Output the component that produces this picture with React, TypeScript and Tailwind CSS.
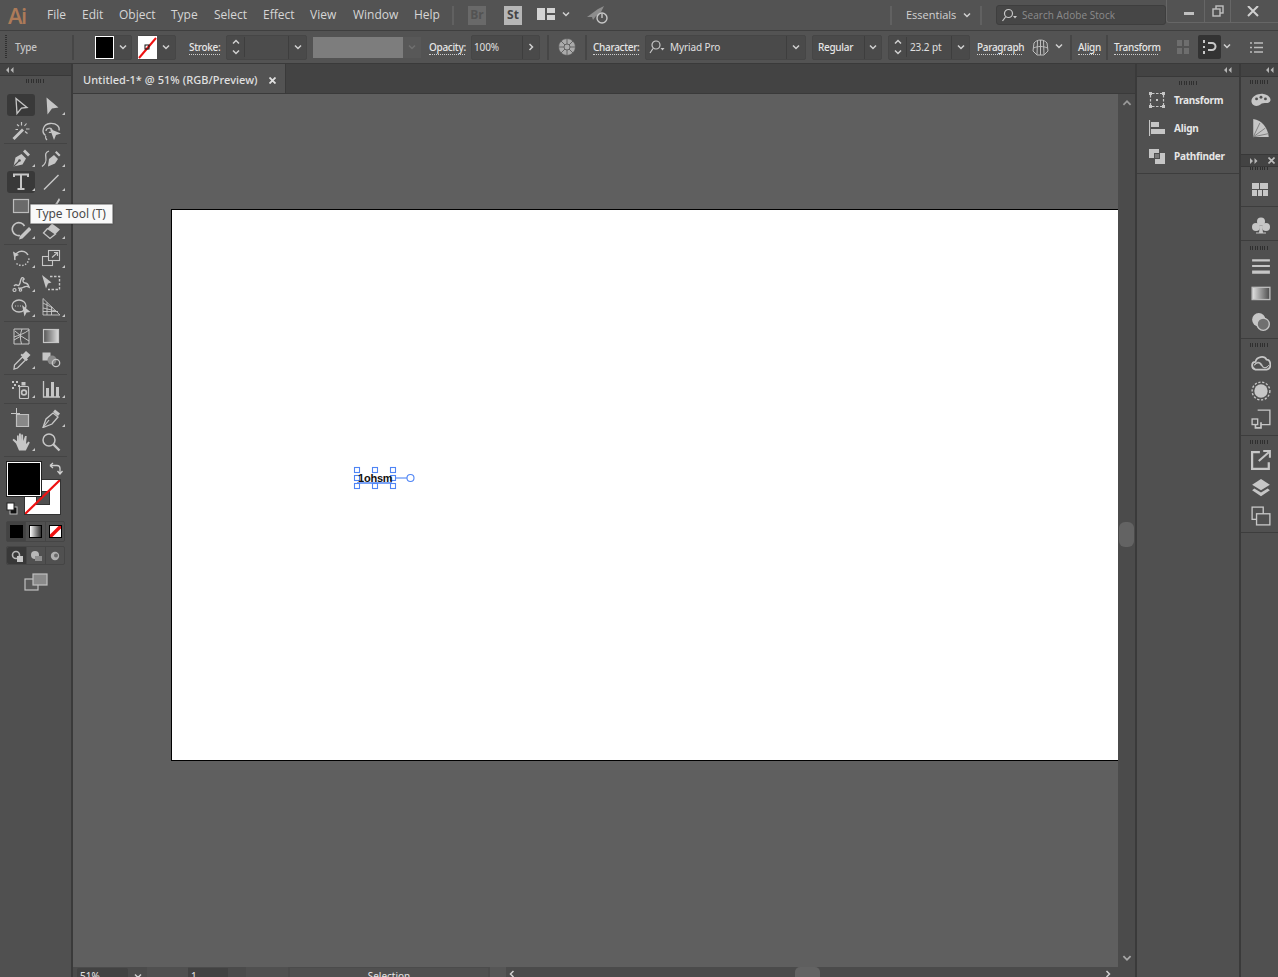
import React from "react";

const C = "#c6c6c6";

function Chev({ dir = "down", color = "#d0d0d0", size = 10 }: { dir?: "down" | "up" | "right" | "left"; color?: string; size?: number }) {
  const d = { down: "M2 3.5 5 6.5 8 3.5", up: "M2 6.5 5 3.5 8 6.5", right: "M3.5 2 6.5 5 3.5 8", left: "M6.5 2 3.5 5 6.5 8" }[dir];
  return (
    <svg width={size} height={size} viewBox="0 0 10 10" fill="none" stroke={color} strokeWidth="1.5">
      <path d={d} />
    </svg>
  );
}

function Dbl({ right = false }: { right?: boolean }) {
  return (
    <svg width="8" height="6" viewBox="0 0 8 6" fill="#b5b5b5">
      {right ? <path d="M0 0 3 3 0 6zM4.5 0 7.5 3 4.5 6z" /> : <path d="M3 0 0 3 3 6zM7.5 0 4.5 3 7.5 6z" />}
    </svg>
  );
}

function Grip({ w = "w-[19px]" }: { w?: string }) {
  return <div className={`h-[4px] ${w} bg-[repeating-linear-gradient(90deg,#2f2f2f_0_1px,transparent_1px_2.4px)]`} />;
}

function Ico({ children, w = 20, h = 20, box }: { children: React.ReactNode; w?: number; h?: number; box?: number }) {
  return (
    <svg width={w} height={h} viewBox={box ? `0 0 ${box} ${box}` : `0 0 ${w} ${h}`} fill="none" stroke={C} strokeWidth="1.2">
      {children}
    </svg>
  );
}

const tools: Record<string, React.ReactNode> = {
  select: <path d="M5 2.5 16 11.5 10.5 12 6 17.5Z" strokeWidth="1.3" />,
  direct: <path d="M5.5 1.5 17.5 11.5 11 12.5 6.5 18.5Z" fill={C} stroke="none" />,
  wand: (
    <>
      <path d="M2.5 18 12 8.5" strokeWidth="2.8" />
      <path d="M10.5 1v3.5M15.5 2.5 13.5 5M18.5 8H15M8 5 6 3.5M16.5 12.5 14 10.5M7 8.5H4.5" />
    </>
  ),
  lasso: (
    <>
      <path d="M4.5 14.5C0 11 2 3 9 2.5s10 3.5 9 7" strokeWidth="1.3" />
      <path d="M5 10c0-3 5-4 6-1 .5 2-2 3-3 2" strokeWidth="1.2" />
      <path d="M5 15c-1 1 0 3 1 4" strokeWidth="1.2" />
      <path d="M9 8 20 12.5 15 14 13 19Z" fill={C} stroke="none" />
    </>
  ),
  pen: (
    <>
      <path d="M2.5 18.5 4.5 9.5 10.5 6 15 10.5 11.5 16.5Z" fill={C} stroke="none" />
      <path d="M2.5 18.5 8 13" stroke="#505050" strokeWidth="1.1" />
      <circle cx="8.5" cy="12.5" r="1.3" fill="#505050" stroke="none" />
      <path d="M12 3.5 14 1.5 19 6.5 17 8.5Z" fill={C} stroke="none" />
    </>
  ),
  curv: (
    <>
      <path d="M7 18.5 8 11 13 7 17 11 14 15.5Z" fill={C} stroke="none" />
      <path d="M14 4.5 15.5 3 19.5 7 18 8.5Z" fill={C} stroke="none" />
      <path d="M8 3C0 6 10 12 1 18.5" strokeWidth="1.3" />
    </>
  ),
  type: <path d="M3 5V2.5h14V5M10 2.5V17M6.5 17h7" strokeWidth="2" />,
  line: <path d="M3 17.5 17.5 3" strokeWidth="1.4" />,
  rect: <rect x="2.5" y="3.5" width="15" height="13" fill="#6a6a6a" strokeWidth="1.2" stroke="#bdbdbd" />,
  brush: <path d="M5 18 15 7 18 2 19 4 16 9 8 19Z" fill={C} stroke="none" />,
  shaper: (
    <>
      <path d="M9 15.5A6.5 6.5 0 1 1 13.5 6" strokeWidth="1.6" />
      <path d="M9 16 18 7 20.5 9.5 11.5 18.5 8 19.5Z" fill={C} stroke="none" />
    </>
  ),
  eraser: (
    <>
      <path d="M6.5 8.5 11 3.5 19 9.5 14.5 14Z" fill={C} stroke="none" />
      <path d="M6.5 8.5 2.5 13 9 18.5 14.5 14Z" strokeWidth="1.3" />
    </>
  ),
  rotate: (
    <>
      <path d="M5.5 15.5A7.5 7.5 0 0 0 18 10" strokeDasharray="1.5 1.5" strokeWidth="1.5" />
      <path d="M4 12A7 7 0 0 1 17 7" strokeWidth="1.5" />
      <path d="M2 3.5 3 9 8 7Z" fill={C} stroke="none" />
    </>
  ),
  scale: (
    <>
      <rect x="1.5" y="8.5" width="10" height="9" strokeWidth="1.1" />
      <rect x="7.5" y="2.5" width="11" height="10" fill="#505050" strokeWidth="1.1" />
      <path d="M11 9.5 16 5M13 4.5h3.5V8" />
    </>
  ),
  warp: (
    <>
      <path d="M3 13C6 9 7 16 9 10c1-5 2-7 4-4-2 1-1 4 1 4s3 1 4 4c-2-1-3-1-5 0-3 2-5 1-6 1" strokeWidth="1.4" />
      <circle cx="3.5" cy="17" r="1.5" />
      <circle cx="9.5" cy="17" r="1.2" />
    </>
  ),
  free: (
    <>
      <path d="M1 2 10.5 9.5 7 10.5 5 15.5Z" fill={C} stroke="none" />
      <path d="M9 3.5h9.5v13H7" strokeDasharray="2.5 1.5" strokeWidth="1.4" />
    </>
  ),
  shape: (
    <>
      <ellipse cx="8" cy="9" rx="7" ry="6" strokeWidth="1.3" />
      <path d="M4 9h7" strokeDasharray="1 1.5" />
      <path d="M11 8 19.5 15 15.5 15.5 13.5 19.5Z" fill={C} stroke="none" />
    </>
  ),
  persp: <path d="M2 1.5V18H19L2 1.5M2 6 12 11M6 5.5V18M10.5 9.5V18M2 11l13 3M2 14.5h15" strokeWidth="0.9" />,
  mesh: <path d="M3 3h15v15H3ZM3 11C8 9 13 8 18 4M10.5 18C9 13 9 8 11 3M3 14l7-4 8 5M4 5l6 5" strokeWidth="1" />,
  grad: (
    <>
      <defs>
        <linearGradient id="gr">
          <stop offset="0" stopColor="#555" />
          <stop offset="1" stopColor="#dcdcdc" />
        </linearGradient>
      </defs>
      <rect x="2.5" y="3.5" width="15" height="13" fill="url(#gr)" stroke="#c6c6c6" />
    </>
  ),
  drop: (
    <>
      <path d="M3 19 3.5 15 11.5 7 14.5 10 6.5 18Z" strokeWidth="1.3" />
      <path d="M11.5 4.5 15 1 19.5 5 16 8.5 17 9.5 15.5 11 9.5 5 11 3.5Z" fill={C} stroke="none" />
    </>
  ),
  blend: (
    <>
      <rect x="1.5" y="2.5" width="8" height="8" fill={C} stroke="none" />
      <circle cx="11" cy="10" r="4.5" fill="#8a8a8a" stroke="none" />
      <circle cx="15" cy="13" r="3.7" strokeWidth="1.3" />
    </>
  ),
  spray: (
    <>
      <rect x="8.5" y="7.5" width="9" height="12" rx="1" />
      <circle cx="13" cy="13.5" r="2.4" strokeWidth="1.6" />
      <rect x="10.5" y="3" width="4" height="3.5" fill={C} stroke="none" />
      <path d="M1 2h2v2H1zM5 2h2v2H5zM3 5h2v2H3zM7 6h2v2H7zM1 8h2v2H1z" fill={C} stroke="none" />
    </>
  ),
  chart: (
    <>
      <path d="M2.5 2V18H19" strokeWidth="1.3" />
      <path d="M5 9h3v9H5zM10 3h3v15h-3zM15 8h3v10h-3z" fill={C} stroke="none" />
    </>
  ),
  board: (
    <>
      <path d="M5.5 6.5H17.5V18.5H5.5Z" fill="#888" stroke="#c0c0c0" />
      <path d="M5.5 0V9M0 5.5H9" stroke={C} strokeWidth="1" />
    </>
  ),
  slice: (
    <>
      <path d="M2 19.5 5 11 12 5 17 9 11 16Z" strokeWidth="1.3" />
      <path d="M2.5 19 8 12" />
      <path d="M12 4 14 1.5 19 5.5 17 8Z" fill={C} stroke="none" />
    </>
  ),
  hand: <path d="M5 11.5 1.5 8l1.2-1.2 3.3 2.5V3.5h1.7L8 8.5V1.5h1.8L10.2 8.5V2.5h1.8L12.3 9 14 4h1.7L15 12l2.5-2.5 1.3 1-4 8H8Z" fill={C} stroke="none" />,
  zoom: (
    <>
      <circle cx="8" cy="8" r="6" strokeWidth="1.5" />
      <path d="M12 12 18.5 18.5" strokeWidth="2.4" />
    </>
  ),
};

type T = [string, boolean];
const groups: { cls: string; row: string; items: [T, T][] }[] = [
  { cls: "h-[51px]", row: "h-[25px]", items: [[["select", false], ["direct", true]], [["wand", false], ["lasso", false]]] },
  { cls: "h-[101px] pt-[2px]", row: "h-[24px]", items: [[["pen", true], ["curv", true]], [["type", true], ["line", true]], [["rect", false], ["brush", false]], [["shaper", true], ["eraser", true]]] },
  { cls: "h-[77px] pt-[1px]", row: "h-[24.5px]", items: [[["rotate", true], ["scale", true]], [["warp", true], ["free", false]], [["shape", true], ["persp", true]]] },
  { cls: "h-[53px] pt-[2px]", row: "h-[24px]", items: [[["mesh", false], ["grad", false]], [["drop", true], ["blend", false]]] },
  { cls: "h-[29px] pt-[2px]", row: "h-[24px]", items: [[["spray", true], ["chart", true]]] },
  { cls: "h-[53px] pt-[2px]", row: "h-[24px]", items: [[["board", false], ["slice", true]], [["hand", true], ["zoom", false]]] },
];

function ToolCell({ name, fly }: { name: string; fly: boolean }) {
  const active = name === "select" || name === "type";
  return (
    <div className="relative flex h-full w-[30px] items-center justify-center">
      {active && <div className="absolute left-[1px] top-[1px] h-[22px] w-[28px] rounded-[3px] bg-[#393939]" />}
      <div className="relative flex">
        <Ico>{tools[name]}</Ico>
      </div>
      {fly && <div className="absolute bottom-[3px] right-[1px] h-0 w-0 border-b-[3px] border-l-[3px] border-b-[#c6c6c6] border-l-transparent" />}
    </div>
  );
}

function ToolPanel() {
  return (
    <div className="relative flex w-[73px] shrink-0 flex-col border-r-2 border-[#3a3a3a] bg-[#505050]">
      <div className="flex h-[12px] items-center border-b border-[#383838] bg-[#434343] pl-[6px]">
        <Dbl />
      </div>
      <div className="flex h-[17px] items-start justify-center pt-[3px]">
        <Grip />
      </div>
      {groups.map((g, i) => (
        <div key={i} className={`${g.cls} mx-[4px] border-b border-[#444444]`}>
          {g.items.map((r, j) => (
            <div key={j} className={`${g.row} flex pl-[2px]`}>
              <ToolCell name={r[0][0]} fly={r[0][1]} />
              <ToolCell name={r[1][0]} fly={r[1][1]} />
            </div>
          ))}
        </div>
      ))}
      <div className="relative h-[64px]">
        <div className="absolute left-[24px] top-[22px] h-[36px] w-[37px] border border-[#333] bg-white">
          <div className="absolute left-[11px] top-[11px] h-[14px] w-[14px] border border-[#333] bg-[#505050]" />
          <svg className="absolute inset-0" width="35" height="34" viewBox="0 0 35 34">
            <path d="M0 34 35 0" stroke="#ee1111" strokeWidth="2.2" />
          </svg>
        </div>
        <div className="absolute left-[7px] top-[5px] h-[34px] w-[34px] border border-white bg-black outline outline-1 outline-[#222]" />
        <svg className="absolute left-[49px] top-[5px]" width="14" height="13" viewBox="0 0 14 13" fill="none" stroke="#cfcfcf" strokeWidth="1.3">
          <path d="M2 3.5h6c2 0 3 1 3 3v5M1 3.5 4 1M1 3.5 4 6M8.5 9l2.5 3 2.5-3" />
        </svg>
        <svg className="absolute left-[6px] top-[45px]" width="12" height="13" viewBox="0 0 12 13">
          <rect x="4" y="5" width="7" height="7" fill="#111" stroke="#bbb" />
          <rect x="1" y="1" width="7" height="7" fill="#fff" stroke="#222" />
        </svg>
      </div>
      <div className="ml-[6px] flex h-[21px] w-[59px] rounded-[2px] border border-[#454545]">
        <div className="flex w-[19px] items-center justify-center border-r border-[#454545] bg-[#434343]">
          <div className="h-[13px] w-[13px] bg-black" />
        </div>
        <div className="flex w-[20px] items-center justify-center border-r border-[#454545]">
          <div className="h-[13px] w-[13px] border border-black bg-gradient-to-r from-white to-[#333]" />
        </div>
        <div className="flex flex-1 items-center justify-center">
          <svg width="13" height="13" viewBox="0 0 13 13">
            <rect width="13" height="13" fill="#fff" />
            <path d="M0 13 13 0" stroke="#e11" strokeWidth="3.4" />
            <rect x="0.5" y="0.5" width="12" height="12" fill="none" stroke="#000" />
          </svg>
        </div>
      </div>
      <div className="ml-[6px] mt-[4px] flex h-[19px] w-[59px] rounded-[2px] border border-[#454545]">
        <div className="flex w-[19px] items-center justify-center rounded-l-[2px] bg-[#383838]">
          <svg width="12" height="12" viewBox="0 0 12 12">
            <circle cx="5" cy="5" r="3.5" fill="none" stroke="#b8b8b8" strokeWidth="1.6" />
            <rect x="6" y="6" width="6" height="6" fill="#c6c6c6" />
          </svg>
        </div>
        <div className="flex w-[20px] items-center justify-center border-x border-[#454545]">
          <svg width="12" height="12" viewBox="0 0 12 12">
            <circle cx="5" cy="5" r="4" fill="#b8b8b8" />
            <rect x="5" y="6" width="7" height="5" fill="#8e8e8e" />
          </svg>
        </div>
        <div className="flex flex-1 items-center justify-center">
          <svg width="10" height="10" viewBox="0 0 10 10">
            <circle cx="5" cy="5" r="4.2" fill="#b0b0b0" />
            <circle cx="6" cy="4.5" r="2" fill="#6a6a6a" />
          </svg>
        </div>
      </div>
      <div className="mt-[8px] flex justify-center">
        <svg width="24" height="18" viewBox="0 0 24 18" fill="none" stroke="#c0c0c0" strokeWidth="1.2">
          <rect x="1" y="6" width="13" height="11" fill="#5a5a5a" />
          <rect x="9" y="1" width="14" height="11" fill="#8a8a8a" />
        </svg>
      </div>
      <div className="absolute left-[30px] top-[140px] flex h-[20px] w-[83px] items-center rounded-[1px] border border-[#a8a8a8] bg-[#f9f9f9] pl-[5px] font-['Noto_Sans',sans-serif] text-[12px] tracking-[-0.03px] text-[#4a4a4a] shadow-[0_0_2px_rgba(0,0,0,0.4)]">
        Type Tool (T)
      </div>
    </div>
  );
}

const menu: [string, string][] = [
  ["File", "w-[35px]"],
  ["Edit", "w-[37px]"],
  ["Object", "w-[52px]"],
  ["Type", "w-[43px]"],
  ["Select", "w-[49px]"],
  ["Effect", "w-[47px]"],
  ["View", "w-[43px]"],
  ["Window", "w-[61px]"],
  ["Help", "w-[38px]"],
];

function MenuBar() {
  return (
    <div className="flex h-[31px] shrink-0 items-center border-b border-[#3f3f3f] bg-[#535353] text-[12px] text-[#d6d6d6]">
      <div className="ml-[8px] w-[39px] font-['Open_Sans',sans-serif] text-[22px] font-semibold leading-none tracking-[-1.5px] text-[#ad7b59]">Ai</div>
      {menu.map(([m, w]) => (
        <div key={m} className={w}>
          {m}
        </div>
      ))}
      <div className="h-[19px] w-[2px] bg-[#616161]" />
      <div className="ml-[14px] flex h-[19px] w-[18px] items-center justify-center bg-[#696969] text-[12px] font-bold text-[#535353]">Br</div>
      <div className="ml-[18px] flex h-[19px] w-[18px] items-center justify-center bg-[#b6b6b6] text-[12px] font-bold text-[#454545]">St</div>
      <svg className="ml-[15px] mb-[2px]" width="18" height="12" viewBox="0 0 18 12" fill="#d4d4d4">
        <path d="M0 0h8v12H0zM10 0h8v5h-8zM10 7h8v5h-8z" />
      </svg>
      <div className="ml-[6px] mb-[3px] flex">
        <Chev />
      </div>
      <svg className="ml-[15px]" width="24" height="20" viewBox="0 0 24 20" fill="none">
        <path d="M1 12 12 4l6-3-3 6-2 3-3 1-3 4-1-3Z" fill="#8d8d8d" />
        <circle cx="16" cy="13" r="5" stroke="#c8c8c8" strokeWidth="1.4" fill="#535353" />
        <path d="M16 8.5v4.5" stroke="#c8c8c8" strokeWidth="1.4" />
      </svg>
      <div className="flex-1" />
      <div className="h-[19px] w-[2px] bg-[#616161]" />
      <div className="ml-[14px] w-[56px] text-[11px] text-[#d2d2d2]">Essentials</div>
      <Chev />
      <div className="ml-[8px] h-[19px] w-[2px] bg-[#616161]" />
      <div className="ml-[14px] flex h-[20px] w-[170px] items-center rounded-[3px] border border-[#3e3e3e] bg-[#464646] pl-[4px] text-[10px] tracking-[0.05px] text-[#8c8c8c]">
        <svg width="17" height="14" viewBox="0 0 17 14" fill="none" stroke="#c8c8c8" strokeWidth="1.2">
          <circle cx="7.5" cy="5.5" r="4" />
          <path d="M4.5 9 1.5 13" />
          <path d="M12 8h4l-2 2.5Z" fill="#c8c8c8" stroke="none" />
        </svg>
        <span className="ml-[4px]">Search Adobe Stock</span>
      </div>
      <div className="flex h-[23px] w-[112px] self-start rounded-bl-[3px] border-b border-l border-[#666666]">
        <div className="flex w-[38px] items-center justify-end border-r border-[#666666] pr-[10px] pt-[4px]">
          <div className="h-[3px] w-[10px] bg-[#c0c0c0]" />
        </div>
        <div className="flex w-[26px] items-center justify-center border-r border-[#666666]">
          <svg width="12" height="12" viewBox="0 0 12 12" fill="none" stroke="#c0c0c0" strokeWidth="1.4">
            <rect x="4" y="1" width="7" height="7" />
            <rect x="1" y="4" width="7" height="7" fill="#535353" />
          </svg>
        </div>
        <div className="flex flex-1 items-center justify-center pr-[4px]">
          <svg width="12" height="11" viewBox="0 0 12 11" fill="none" stroke="#d0d0d0" strokeWidth="2">
            <path d="M1 0 11 10M11 0 1 10" />
          </svg>
        </div>
      </div>
    </div>
  );
}

const Lbl = ({ t, w }: { t: string; w: string }) => (
  <span className={`${w} mt-[2px] block whitespace-nowrap border-b border-dotted border-[#cfcfcf] font-['Noto_Sans',sans-serif] text-[10px] font-medium leading-[13px] tracking-[-0.3px] text-[#e6e6e6]`}>{t}</span>
);
const Sep = ({ cls }: { cls: string }) => <div className={`${cls} h-[25px] w-[2px] shrink-0 bg-[#464646]`} />;

function Spin() {
  return (
    <div className="flex w-[18px] flex-col items-center justify-center border-r border-[#3e3e3e]">
      <Chev dir="up" />
      <Chev />
    </div>
  );
}

function ControlBar() {
  const box = "flex h-[25px] shrink-0 items-center rounded-[2px] border border-[#464646] bg-[#4a4a4a]";
  const val = "font-['Noto_Sans',sans-serif] text-[10px] tracking-[-0.1px] text-[#e0e0e0]";
  return (
    <div className="flex h-[33px] shrink-0 items-center border-b border-[#3a3a3a] bg-[#535353]">
      <div className="ml-[5px] h-[24px] w-[2px] bg-[repeating-linear-gradient(180deg,#303030_0_1px,transparent_1px_2px)]" />
      <span className="ml-[8px] w-[57px] font-['Noto_Sans',sans-serif] text-[10px] font-medium tracking-[-0.2px] text-[#c4c4c4]">Type</span>
      <Sep cls="" />
      <div className={`${box} ml-[21px] w-[37px] border-[#4a4a4a]`}>
        <div className="ml-[-1px] h-[23px] w-[19px] border border-white bg-black" />
        <div className="flex flex-1 items-center justify-center">
          <Chev />
        </div>
      </div>
      <div className={`${box} ml-[6px] w-[38px] border-[#4a4a4a]`}>
        <svg width="19" height="23" viewBox="0 0 19 23" className="ml-[-1px]">
          <rect width="19" height="23" fill="#fff" />
          <path d="M1 22 18 2" stroke="#e11" strokeWidth="2" />
          <rect x="7" y="9" width="4" height="4" fill="none" stroke="#111" />
        </svg>
        <div className="flex flex-1 items-center justify-center">
          <Chev />
        </div>
      </div>
      <div className="ml-[13px]">
        <Lbl t="Stroke:" w="w-[31px]" />
      </div>
      <div className={`${box} ml-[6px] w-[81px]`}>
        <Spin />
        <div className="h-full w-[44px] border-r border-[#3e3e3e] bg-[#4c4c4c]" />
        <div className="flex flex-1 justify-center">
          <Chev />
        </div>
      </div>
      <div className="ml-[6px] h-[21px] w-[90px] shrink-0 bg-[#7d7d7d]" />
      <div className="flex h-[21px] w-[18px] shrink-0 items-center justify-center bg-[#585858]">
        <Chev color="#707070" />
      </div>
      <div className="ml-[8px]">
        <Lbl t="Opacity:" w="w-[36px]" />
      </div>
      <div className={`${box} ml-[6px] w-[69px]`}>
        <span className={`${val} w-[51px] border-r border-[#3e3e3e] pl-[2px] leading-[23px]`}>100%</span>
        <div className="flex flex-1 justify-center">
          <Chev dir="right" />
        </div>
      </div>
      <Sep cls="ml-[7px]" />
      <svg className="ml-[9px] shrink-0" width="18" height="18" viewBox="0 0 18 18" fill="#aaaaaa" stroke="#535353" strokeWidth="0.8">
        <circle cx="9" cy="9" r="8.5" />
        <path d="M9 1V17M1 9H17M3 3 15 15M15 3 3 15" />
        <circle cx="9" cy="9" r="3" />
      </svg>
      <Sep cls="ml-[9px]" />
      <div className="ml-[6px]">
        <Lbl t="Character:" w="w-[46px]" />
      </div>
      <div className={`${box} ml-[6px] w-[161px]`}>
        <div className="flex h-full w-[141px] items-center border-r border-[#3e3e3e] pl-[2px]">
          <svg width="18" height="14" viewBox="0 0 18 14" fill="none" stroke="#c8c8c8" strokeWidth="1.2">
            <circle cx="8" cy="5" r="4" />
            <path d="M5 8.5 2 13" />
            <path d="M12.5 8h4l-2 2.5Z" fill="#c8c8c8" stroke="none" />
          </svg>
          <span className={`${val} ml-[4px]`}>Myriad Pro</span>
        </div>
        <div className="flex flex-1 justify-center">
          <Chev />
        </div>
      </div>
      <div className={`${box} ml-[6px] w-[70px]`}>
        <span className="w-[52px] border-r border-[#3e3e3e] pl-[5px] font-['Noto_Sans',sans-serif] text-[10px] font-medium leading-[23px] tracking-[-0.3px] text-[#e6e6e6]">Regular</span>
        <div className="flex flex-1 justify-center">
          <Chev />
        </div>
      </div>
      <div className={`${box} ml-[6px] w-[82px]`}>
        <Spin />
        <span className={`${val} w-[45px] border-r border-[#3e3e3e] pl-[3px] leading-[23px]`}>23.2 pt</span>
        <div className="flex flex-1 justify-center">
          <Chev />
        </div>
      </div>
      <div className="ml-[7px]">
        <Lbl t="Paragraph" w="w-[45px]" />
      </div>
      <svg className="ml-[10px] shrink-0" width="17" height="17" viewBox="0 0 17 17" fill="none" stroke="#bdbdbd" strokeWidth="1">
        <path d="M2 4C5 0 12 0 15 4L16 12 12 16H5L1 12ZM5.5 2 5 15.5M11.5 2 12 15.5M8.5 1V16M1.5 9C6 7 11 7 15.5 9" />
      </svg>
      <div className="ml-[5px] mb-[3px] flex shrink-0">
        <Chev />
      </div>
      <Sep cls="ml-[6px]" />
      <div className="ml-[6px]">
        <Lbl t="Align" w="w-[22px]" />
      </div>
      <Sep cls="ml-[6px]" />
      <div className="ml-[6px]">
        <Lbl t="Transform" w="w-[44px]" />
      </div>
      <svg className="ml-[18px] shrink-0" width="14" height="14" viewBox="0 0 14 14" fill="#6e6e6e">
        <path d="M1 0h5v6H1zM8 0h5v6H8zM1 8h5v6H1zM8 8h5v6H8z" />
      </svg>
      <div className="ml-[8px] flex h-[24px] w-[23px] shrink-0 items-center justify-center rounded-[2px] bg-[#333333]">
        <svg width="15" height="16" viewBox="0 0 15 16" fill="none" stroke="#c8c8c8" strokeWidth="2">
          <path d="M2 1v3M2 7v2M2 12v3M6 4h4a3.5 3.5 0 0 1 0 7H6" />
        </svg>
      </div>
      <div className="ml-[1px] mb-[3px] flex shrink-0">
        <Chev />
      </div>
      <svg className="ml-[18px] shrink-0" width="13" height="11" viewBox="0 0 13 11" fill="none" stroke="#bdbdbd" strokeWidth="1.3">
        <path d="M0 1h2M4 1h9M0 5.5h2M4 5.5h9M0 10h2M4 10h9" />
      </svg>
    </div>
  );
}

function Canvas() {
  return (
    <div className="flex flex-1 flex-col overflow-hidden bg-[#5f5f5f]">
      <div className="flex-1 overflow-hidden pl-[98px] pt-[115px]">
        <div className="relative h-[552px] w-[1000px] border border-black bg-white">
          <svg className="absolute left-[179px] top-[255px]" width="66" height="26" viewBox="0 0 66 26" fill="#fff" stroke="#4f85f5" strokeWidth="1.1">
            <path d="M6 18H41" strokeWidth="1.4" fill="none" />
            <path d="M42 13H56" fill="none" />
            <rect x="3.5" y="2.5" width="5" height="5" />
            <rect x="21.5" y="2.5" width="5" height="5" />
            <rect x="39.5" y="2.5" width="5" height="5" />
            <rect x="3.5" y="10.5" width="5" height="5" />
            <rect x="39.5" y="10.5" width="5" height="5" />
            <rect x="3.5" y="18.5" width="5" height="5" />
            <rect x="21.5" y="18.5" width="5" height="5" />
            <rect x="39.5" y="18.5" width="5" height="5" />
            <circle cx="59.5" cy="13" r="3.5" />
          </svg>
          <div className="absolute left-[186px] top-[262px] font-['Liberation_Sans',sans-serif] text-[11px] font-bold leading-[13px] tracking-[-0.2px] text-[#111]">1ohsm</div>
        </div>
      </div>
      <StatusBar />
    </div>
  );
}

function StatusBar() {
  const t = "font-['Noto_Sans',sans-serif] text-[10px] leading-[10px] text-[#e4e4e4]";
  return (
    <div className="flex h-[10px] shrink-0 items-start overflow-hidden bg-[#4b4b4b] pl-[4px]">
      <div className={`${t} mt-[1px] h-[9px] w-[51px] rounded-t-[2px] bg-[#424242] pl-[3px] pt-[3px]`}>51%</div>
      <div className="ml-[1px] mt-[1px] flex h-[9px] w-[17px] justify-center pt-[3px]">
        <Chev />
      </div>
      <div className="ml-[1px] h-[10px] w-[41px] bg-[#505050]" />
      <div className={`${t} mt-[1px] h-[9px] w-[40px] bg-[#424242] pl-[3px] pt-[3px]`}>1</div>
      <div className="ml-[1px] mt-[1px] h-[9px] w-[17px]" />
      <div className="h-[10px] w-[42px] bg-[#505050]" />
      <div className={`${t} ml-[2px] mt-[1px] h-[9px] w-[198px] bg-[#505050] pt-[3px] text-center`}>Selection</div>
      <div className="ml-[2px] h-[10px] w-[16px] bg-[#565656]" />
      <div className="ml-[1px] mt-[2px] flex">
        <Chev dir="left" />
      </div>
      <div className="ml-[278px] h-[10px] w-[25px] rounded-t-[5px] bg-[#636363]" />
      <div className="ml-[283px] mt-[2px] flex">
        <Chev dir="right" />
      </div>
    </div>
  );
}

function VScroll() {
  return (
    <div className="flex w-[17px] shrink-0 flex-col items-center bg-[#4b4b4b]">
      <div className="mt-[3px] flex">
        <Chev dir="up" color="#9a9a9a" size={12} />
      </div>
      <div className="mt-[413px] h-[25px] w-[15px] rounded-[6px] bg-[#636363]" />
      <div className="mt-[405px] flex">
        <Chev color="#a8a8a8" size={12} />
      </div>
    </div>
  );
}

function Dock() {
  const rows: [string, React.ReactNode][] = [
    [
      "Transform",
      <Ico w={16} h={16} key="t">
        <path d="M3 1.5h10M3 14.5h10M1.5 3v10M14.5 3v10" strokeDasharray="2.5 1.5" />
        <path d="M0 0h3v3H0zM13 0h3v3h-3zM0 13h3v3H0zM13 13h3v3h-3zM7 7h2v2H7z" fill={C} stroke="none" />
      </Ico>,
    ],
    [
      "Align",
      <Ico w={16} h={16} key="a">
        <path d="M.5 0v16" />
        <path d="M2 2h8v5H2zM2 9h14v5H2z" fill={C} stroke="none" />
      </Ico>,
    ],
    [
      "Pathfinder",
      <Ico w={16} h={16} key="p">
        <path d="M0 1h10v4h-5v5H0z" fill={C} stroke="none" />
        <path d="M6 6h4v4H6z" fill="#7a7a7a" stroke="none" />
        <path d="M11 5h5v11H6v-5h5z" fill={C} stroke="none" />
      </Ico>,
    ],
  ];
  return (
    <div className="flex w-[106px] shrink-0 flex-col border-x-2 border-[#3a3a3a] bg-[#505050]">
      <div className="flex h-[13px] items-center justify-end border-b border-[#383838] bg-[#434343] pr-[7px]">
        <Dbl />
      </div>
      <div className="h-[97px] border-b border-[#3d3d3d]">
        <div className="flex h-[8px] items-end justify-center">
          <Grip />
        </div>
        {rows.map(([t, ic], i) => (
          <div key={t} className={`flex h-[28px] items-center pl-[12px] ${i === 0 ? "mt-[1px]" : ""}`}>
            {ic}
            <span className="ml-[9px] font-['Noto_Sans',sans-serif] text-[10px] font-bold tracking-[-0.25px] text-[#e6e6e6]">{t}</span>
          </div>
        ))}
      </div>
    </div>
  );
}

function RIcon({ children }: { children: React.ReactNode }) {
  return (
    <div className="flex h-[28px] items-center justify-center pl-[2px]">
      <Ico w={20} h={20} box={18}>{children}</Ico>
    </div>
  );
}

function FarRight() {
  const grp = "border-b border-[#3d3d3d]";
  const grip = "flex h-[6px] items-center justify-center";
  return (
    <div className="relative flex w-[37px] shrink-0 flex-col bg-[#505050]">
      <div className="flex h-[13px] items-center justify-end border-b border-[#383838] bg-[#434343] pr-[4px]">
        <Dbl />
      </div>
      <div className="h-[77px] overflow-hidden pt-[2px]">
        <div className={grip}>
          <Grip />
        </div>
        <div className="mt-[1px]">
          <RIcon>
            <path d="M.5 11C-.5 6 6 3 11 3.5c4 .5 7 3 6.5 6-1 4-6 1-9 3.500-2 2-7 2-8-2Z" fill={C} stroke="none" />
            <circle cx="5" cy="8" r="1.3" fill="#505050" stroke="none" />
            <circle cx="9" cy="6.5" r="1.3" fill="#505050" stroke="none" />
            <circle cx="13" cy="8" r="1.3" fill="#505050" stroke="none" />
          </RIcon>
          <RIcon>
            <path d="M2 1C10 2 15 9 16 17H2Z" fill={C} stroke="none" />
            <path d="M2 17 8 4.5M2 17 13 9M2 17 16 14" stroke="#7a7a7a" strokeWidth="0.8" />
          </RIcon>
          <RIcon>
            <path d="M2 16C8 6 10 14 16 8" strokeWidth="1.6" />
          </RIcon>
        </div>
      </div>
      <div className={`${grp} h-[53px] pt-[12px]`}>
        <div className="flex justify-center">
          <Grip />
        </div>
        <div className="mt-[13px] flex justify-center pl-[1px]">
          <svg width="16" height="13" viewBox="0 0 16 13" fill={C}>
            <path d="M0 0h7v6H0zM8 0h8v6H8zM0 7h5v6H0zM6 7h4v6H6zM11 7h5v6h-5z" />
          </svg>
        </div>
      </div>
      <div className={`${grp} flex h-[34px] items-center justify-center pl-[2px] pt-[3px]`}>
        <svg width="18" height="19" viewBox="0 0 18 18" fill={C}>
          <circle cx="9" cy="5" r="4" />
          <circle cx="4" cy="10.5" r="4" />
          <circle cx="14" cy="10.5" r="4" />
          <path d="M8 9h2l1 7h3v1H4v-1h3z" />
        </svg>
      </div>
      <div className={`${grp} h-[98px] pt-[4px]`}>
        <div className={grip}>
          <Grip />
        </div>
        <div className="mt-[1px]">
          <RIcon>
            <path d="M1 3h16v2H1zM1 8h16v2H1zM1 13h16v3H1z" fill={C} stroke="none" />
          </RIcon>
          <RIcon>
            <defs>
              <linearGradient id="gr2">
                <stop offset="0" stopColor="#e4e4e4" />
                <stop offset="1" stopColor="#4a4a4a" />
              </linearGradient>
            </defs>
            <rect x="1" y="3" width="16" height="11" fill="url(#gr2)" stroke="#bbb" />
          </RIcon>
          <RIcon>
            <circle cx="7" cy="7" r="6" fill={C} stroke="none" />
            <circle cx="11" cy="11" r="5.5" fill="#707070" stroke="#c6c6c6" />
          </RIcon>
        </div>
      </div>
      <div className={`${grp} h-[97px] pt-[3px]`}>
        <div className={grip}>
          <Grip />
        </div>
        <div className="mt-[1px]">
          <RIcon>
            <path d="M4 15C0 14 0 8 4 8 5 3 12 2 14 6c4 0 5 8 0 9Z" strokeWidth="1.6" />
            <path d="M3 11c2-4 6-3 7 0s4 3 6 0c-2 3-5 3-7 0s-4-2-6 0Z" fill={C} stroke={C} strokeWidth="0.8" />
          </RIcon>
          <RIcon>
            <circle cx="9" cy="9" r="6" fill={C} stroke="none" />
            <circle cx="9" cy="9" r="8" strokeDasharray="2 1.5" />
          </RIcon>
          <RIcon>
            <path d="M6 1h11v13H9" />
            <rect x="1" y="9" width="5" height="5" />
            <path d="M4 14v3h5v-5" strokeWidth="1.5" />
          </RIcon>
        </div>
      </div>
      <div className={`${grp} h-[97px] pt-[3px]`}>
        <div className={grip}>
          <Grip />
        </div>
        <div className="mt-[1px]">
          <RIcon>
            <path d="M8 2H1v15h15v-6" strokeWidth="2" />
            <path d="M7 10 16 2M11 1h6v6" strokeWidth="1.8" />
          </RIcon>
          <RIcon>
            <path d="M9 1 17 6 9 11 1 6Z" fill={C} stroke="none" />
            <path d="M3 9.5 9 13l6-3.5 2 1.5-8 5.5-8-5.5Z" fill={C} stroke="none" />
          </RIcon>
          <RIcon>
            <rect x="1" y="1" width="10" height="11" />
            <rect x="5" y="7" width="12" height="10" fill="#505050" />
          </RIcon>
        </div>
      </div>
      <div className="absolute left-0 top-[90px] flex h-[13px] w-[37px] items-center justify-between border-y border-[#383838] bg-[#434343] pl-[9px] pr-[3px]">
        <Dbl right />
        <svg width="7" height="7" viewBox="0 0 7 7" stroke="#bdbdbd" strokeWidth="1.6">
          <path d="M.5.5l6 6M6.5.5l-6 6" />
        </svg>
      </div>
    </div>
  );
}

export default function App() {
  return (
    <div className="flex h-[977px] w-[1278px] flex-col overflow-hidden bg-[#535353] font-['Open_Sans',sans-serif]">
      <MenuBar />
      <ControlBar />
      <div className="flex min-h-0 flex-1">
        <ToolPanel />
        <div className="flex min-w-0 flex-1 flex-col">
          <div className="flex h-[30px] shrink-0 border-b border-[#3a3a3a] bg-[#434343]">
            <div className="flex w-[213px] items-center border-r border-[#3a3a3a] bg-[#535353] pl-[10px] pt-[3px] font-['Noto_Sans',sans-serif] text-[11px] font-medium tracking-[0.05px] text-[#e0e0e0]">
              <span className="w-[186px]">Untitled-1* @ 51% (RGB/Preview)</span>
              <svg width="7" height="7" viewBox="0 0 7 7" stroke="#e0e0e0" strokeWidth="1.8">
                <path d="M.5.5l6 6M6.5.5l-6 6" />
              </svg>
            </div>
          </div>
          <div className="flex min-h-0 flex-1">
            <Canvas />
            <VScroll />
          </div>
        </div>
        <Dock />
        <FarRight />
      </div>
    </div>
  );
}
